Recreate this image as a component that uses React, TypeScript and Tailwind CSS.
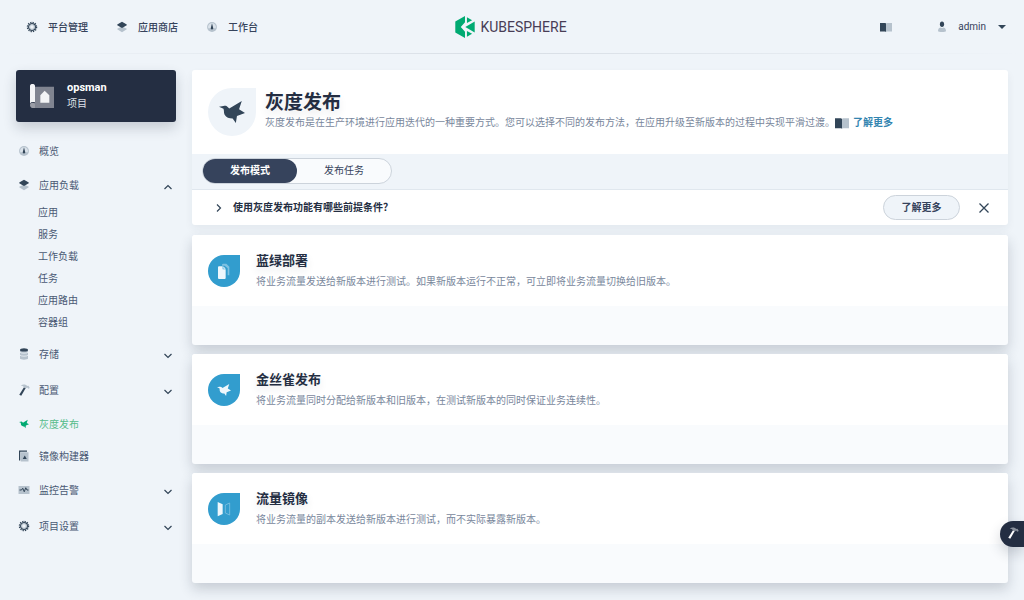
import React from "react";

const DARK = "#324558";
const LIGHT = "#b6c2cd";

type IconProps = { className?: string; dark?: string; light?: string };

function Gear({ className = "size-3", dark = DARK, light = LIGHT }: IconProps) {
  return (
    <svg className={className} viewBox="0 0 24 24" aria-hidden="true">
      <circle cx="12" cy="12" r="9.2" fill="none" stroke={dark} strokeWidth="2.6" strokeDasharray="2.6 2.217" />
      <circle cx="12" cy="12" r="6.8" fill="none" stroke={dark} strokeWidth="2.4" />
      <circle cx="12" cy="12" r="4.6" fill="none" stroke={light} strokeWidth="2" />
    </svg>
  );
}

function Layers({ className = "size-3" }: IconProps) {
  return (
    <svg className={className} viewBox="0 0 24 24" aria-hidden="true">
      <path d="M2.500 15.500 12 11l9.500 4.500v1L12 22.500 2.500 16.500z" fill={LIGHT} />
      <path d="M12 1.500 21.500 7v1.500L12 14 2.500 8.500V7z" fill={DARK} />
    </svg>
  );
}

function Dashboard({ className = "size-3" }: IconProps) {
  return (
    <svg className={className} viewBox="0 0 24 24" aria-hidden="true">
      <circle cx="12" cy="12" r="9.800" fill={LIGHT} />
      <path d="M12 4a8 8 0 0 0-7.500 10.500h15A8 8 0 0 0 12 4z" fill="#dbe3eb" />
      <path d="M12 4.500l2.300 9a2.500 2.500 0 1 1-4.600 0z" fill={DARK} />
    </svg>
  );
}

function Book({ className = "size-3" }: IconProps) {
  return (
    <svg className={className} viewBox="0 0 24 24" aria-hidden="true">
      <path d="M0 4h10.500l1.500 1v17l-1.500-1H0z" fill={DARK} />
      <path d="M24 4H13.500L12 5v17l1.500-1H24z" fill={LIGHT} />
    </svg>
  );
}

function Person({ className = "size-3" }: IconProps) {
  return (
    <svg className={className} viewBox="0 0 24 24" aria-hidden="true">
      <ellipse cx="12" cy="6.500" rx="4.200" ry="5.500" fill={DARK} />
      <path d="M4 20c0-5 3-7 5.500-7 1.500 1.500 3.500 1.500 5 0 2.500 0 5.500 2 5.500 7 0 2.500-16 2.500-16 0z" fill={LIGHT} />
    </svg>
  );
}

function Storage({ className = "size-3" }: IconProps) {
  return (
    <svg className={className} viewBox="0 0 24 24" aria-hidden="true">
      <path d="M4 4v17c0 3 16 3 16 0V4z" fill={LIGHT} />
      <path d="M4 8.500c2 2.500 14 2.500 16 0M4 14.500c2 2.500 14 2.500 16 0" fill="none" stroke="#eff4f9" strokeWidth="1.500" />
      <ellipse cx="12" cy="3.800" rx="8" ry="3.300" fill={DARK} />
    </svg>
  );
}

function Hammer({ className = "size-3", dark = DARK, light = LIGHT }: IconProps) {
  return (
    <svg className={className} viewBox="0 0 24 24" aria-hidden="true">
      <path d="M12 6.500 15.500 8 6.500 23.500 2.500 21.500z" fill={dark} />
      <path d="M5.500 3C10-.5 16 .5 19 4l2-.5 2.500 4.500-3 1.500-2-2.500-3 1.500-4-2C10.500 4.500 8.500 3.500 5.500 3z" fill={light} />
    </svg>
  );
}

function Bird({ className = "size-3", color = DARK }: { className?: string; color?: string }) {
  return (
    <svg className={className} viewBox="41 39 81 81" aria-hidden="true">
      <path
        d="M41 63.500 55 61c5-2 10-.5 13 3l5 4.500 39-23.500-8.500 26 18.500 11.500-25 9.500-3.500 22-10-14c-11 0-20-4-25-12-3-5.500-1-11-3.500-18.500z"
        fill={color}
      />
    </svg>
  );
}

function ImageBuilder({ className = "size-3" }: IconProps) {
  return (
    <svg className={className} viewBox="0 0 24 24" aria-hidden="true">
      <path d="M2 1h16v2.500H4.500V21H2z" fill={DARK} />
      <path d="M5.500 4.500H21V23H5.500z" fill={LIGHT} />
      <path d="m13.500 11 4 7h-8z" fill={DARK} />
    </svg>
  );
}

function Monitor({ className = "size-3" }: IconProps) {
  return (
    <svg className={className} viewBox="0 0 24 24" aria-hidden="true">
      <path d="M1 4h22v16H1z" fill={LIGHT} />
      <path d="M3 12h4l2.500-3.500 3 7 3-8 2.500 4.500h3" fill="none" stroke={DARK} strokeWidth="2" />
    </svg>
  );
}

function Chevron({ className = "" }: { className?: string }) {
  return (
    <svg className={`size-[10px] ${className}`} viewBox="0 0 10 10" aria-hidden="true">
      <path d="m1.500 3 3.500 3.500L8.500 3" fill="none" stroke={DARK} strokeWidth="1.200" />
    </svg>
  );
}

function Logo() {
  return (
    <svg className="h-[22px] w-5" viewBox="45 47 60 68" aria-hidden="true">
      <path d="M75 47v19L62 81l13 15v19L45 98V64z" fill="#00aa72" />
      <path d="M81 51 97 60 81 69z" fill="#00aa72" />
      <path d="M81 93 97 102 81 111z" fill="#00aa72" />
      <path d="M105 64v34L76 81z" fill="#00aa72" />
    </svg>
  );
}

function Project() {
  return (
    <svg className="size-6" viewBox="90 252 72 72" aria-hidden="true">
      <path d="M104 260h58v64H97v-16h7z" fill="#808490" />
      <path d="M90 258c0-8 15-8 15 0v48H97c-4 0-7 4-7 7z" fill="#f3f4f6" />
      <path d="M90 315c0-9 15-9 15 0v9h-8c-4 0-7-4-7-9z" fill="#9a9da6" />
      <path d="M134 272 148 286v22h-27v-22z" fill="#f3f4f6" />
    </svg>
  );
}

function BlueGreen() {
  return (
    <svg className="size-4" viewBox="0 0 48 48" aria-hidden="true">
      <path d="M18 6q0-4 4-4h9l9 9v26h-5V16l-9-8h-8z" fill="#7ec1e1" />
      <path d="M6 13q0-3 3-3h11v9h9v26q0 3-3 3H9q-3 0-3-3z" fill="#eff7fc" />
      <path d="M22 10l7 7h-7z" fill="#eff7fc" />
    </svg>
  );
}

function Mirror() {
  return (
    <svg className="size-4" viewBox="0 0 48 48" aria-hidden="true">
      <path d="M5 3 20 10v29L5 46z" fill="#eff7fc" />
      <path d="M41 6 28 12v24l13 6z" fill="none" stroke="#7ec1e1" strokeWidth="2.500" />
    </svg>
  );
}

const topLinks = [
  { label: "平台管理", icon: <Gear /> },
  { label: "应用商店", icon: <Layers /> },
  { label: "工作台", icon: <Dashboard /> },
];

type NavItem = { label: string; icon: React.ReactNode; active?: boolean; open?: boolean; children?: string[] };

const navItems: NavItem[] = [
  { label: "概览", icon: <Dashboard /> },
  {
    label: "应用负载",
    icon: <Layers />,
    open: true,
    children: ["应用", "服务", "工作负载", "任务", "应用路由", "容器组"],
  },
  { label: "存储", icon: <Storage />, children: [] },
  { label: "配置", icon: <Hammer />, children: [] },
  { label: "灰度发布", icon: <Bird className="size-[10px]" color="#00aa72" />, active: true },
  { label: "镜像构建器", icon: <ImageBuilder /> },
  { label: "监控告警", icon: <Monitor />, children: [] },
  { label: "项目设置", icon: <Gear />, children: [] },
];

const modes = [
  {
    title: "蓝绿部署",
    text: "将业务流量发送给新版本进行测试。如果新版本运行不正常，可立即将业务流量切换给旧版本。",
    icon: <BlueGreen />,
  },
  {
    title: "金丝雀发布",
    text: "将业务流量同时分配给新版本和旧版本，在测试新版本的同时保证业务连续性。",
    icon: <Bird className="size-[14px]" color="#eff7fc" />,
  },
  {
    title: "流量镜像",
    text: "将业务流量的副本发送给新版本进行测试，而不实际暴露新版本。",
    icon: <Mirror />,
  },
];

function NavRow({ item }: { item: NavItem }) {
  const body = (
    <>
      <span className="flex w-[15px] justify-center pb-[2px]">{item.icon}</span>
      <span>{item.label}</span>
    </>
  );
  if (!item.children) {
    return (
      <li>
        <a
          href="#"
          className={`flex h-8 items-center gap-2 ${item.active ? "text-[#55bc8a]" : "text-[#4a5974]"}`}
        >
          {body}
        </a>
      </li>
    );
  }
  return (
    <li>
      <button type="button" aria-expanded={!!item.open} className="flex h-9 w-full items-center gap-2 text-[#4a5974]">
        {body}
        <span className="ml-auto pt-px pr-[3px]">
          <Chevron className={item.open ? "rotate-180" : ""} />
        </span>
      </button>
      {item.open && (
        <ul className="-mt-[2px] pb-[3px] pl-[22px]">
          {item.children.map((child) => (
            <li key={child}>
              <a href="#" className="flex h-[22px] items-center text-[#4a5974]">
                {child}
              </a>
            </li>
          ))}
        </ul>
      )}
    </li>
  );
}

export default function App() {
  return (
    <div className="min-h-screen overflow-x-hidden bg-[#eff4f9] font-[Roboto,'Noto_Sans_CJK_SC',sans-serif] text-[10px] leading-4 text-[#242e42]">
      <header className="grid h-[53px] grid-cols-[1fr_auto_1fr] items-center px-[26px]">
        <nav className="flex gap-7 font-medium text-[#36435c]">
          {topLinks.map((link) => (
            <a key={link.label} href="#" className="flex items-center gap-[10px] pt-[2px]">
              <span className="pb-[2px]">{link.icon}</span>
              {link.label}
            </a>
          ))}
        </nav>
        <a href="#" className="flex items-center gap-[5px] pr-[2px]">
          <Logo />
          <span className="text-[14px] leading-5 text-[#483d55]">KUBESPHERE</span>
        </a>
        <div className="flex items-center justify-end">
          <a href="#" aria-label="文档" className="mr-11">
            <Book />
          </a>
          <button type="button" className="-mr-2 flex items-center gap-[10px] text-[#36435c]">
            <Person />
            admin
            <svg className="ml-[2px] h-1 w-2" viewBox="0 0 8 4" aria-hidden="true">
              <path d="M0 0h8L4 4z" fill={DARK} />
            </svg>
          </button>
        </div>
      </header>
      <div className="h-px bg-linear-to-r from-transparent via-[#d8dee5] to-transparent" />

      <div className="flex gap-4 px-4 pt-4 pb-[17px]">
        <aside className="w-40 shrink-0">
          <button
            type="button"
            className="flex h-[52px] w-full items-center gap-[13px] rounded-[3px] bg-[#242e42] px-[14px] text-left text-white shadow-[0_6px_13px_rgba(36,46,66,0.2)]"
          >
            <Project />
            <span className="flex flex-col">
              <strong className="text-[11px] leading-4">opsman</strong>
              <span className="leading-4 text-[#dfe2e8]">项目</span>
            </span>
          </button>
          <nav className="pt-[14px]">
            <ul>
              {navItems.map((item) => (
                <NavRow key={item.label} item={item} />
              ))}
            </ul>
          </nav>
        </aside>

        <main className="flex min-w-0 flex-1 flex-col gap-[9px]">
          <section className="mb-px overflow-hidden rounded-[3px] bg-white shadow-[0_4px_8px_rgba(36,46,66,0.06)]">
            <div className="flex h-[84px] items-center gap-[9px] px-4">
              <span className="flex size-12 shrink-0 items-center justify-center rounded-full rounded-tr-none bg-[#eff4f9]">
                <Bird className="size-[26px]" />
              </span>
              <div className="pb-[2px]">
                <h1 className="text-[19px] leading-6 font-bold text-shadow-[0_4px_8px_rgba(36,46,66,0.1)]">灰度发布</h1>
                <p className="flex items-center text-[#79879c]">
                  灰度发布是在生产环境进行应用迭代的一种重要方式。您可以选择不同的发布方法，在应用升级至新版本的过程中实现平滑过渡。
                  <a href="#" className="flex items-center gap-1 font-bold text-[#3385b0]">
                    <Book className="size-[14px]" />
                    了解更多
                  </a>
                </p>
              </div>
            </div>
            <div className="flex h-9 items-center border-b border-[#e0e7ee] bg-[#eff4f9] px-[10px] pb-[2px]">
              <div className="flex h-[26px] rounded-full border border-[#ccd3db] bg-[#f9fbfd]">
                <button type="button" className="h-6 w-[94px] rounded-full bg-[#36435c] font-bold text-white">
                  发布模式
                </button>
                <button type="button" className="h-6 w-[94px] rounded-full text-[#36435c]">
                  发布任务
                </button>
              </div>
            </div>
            <div className="flex h-[35px] items-center pr-[21px] pl-[22px]">
              <button type="button" className="flex items-center gap-[9px] font-bold">
                <Chevron className="-rotate-90" />
                使用灰度发布功能有哪些前提条件？
              </button>
              <button
                type="button"
                className="ml-auto h-[25px] w-[77px] rounded-full border border-[#ccd3db] bg-[#eff4f9] font-bold text-[#36435c]"
              >
                了解更多
              </button>
              <button type="button" aria-label="关闭" className="ml-[17px] -mr-1 p-px">
                <svg className="size-3" viewBox="0 0 12 12" aria-hidden="true">
                  <path d="m1.500 1.500 9 9m0-9-9 9" stroke={DARK} strokeWidth="1.300" />
                </svg>
              </button>
            </div>
          </section>

          {modes.map((mode) => (
            <a
              key={mode.title}
              href="#"
              className="block rounded-[3px] bg-[#f9fbfd] shadow-[0_6px_13px_rgba(36,46,66,0.2)]"
            >
              <div className="flex h-[71px] items-center gap-4 rounded-t-[3px] bg-white px-4">
                <span className="flex size-8 shrink-0 items-center justify-center rounded-full rounded-tr-none bg-[#329dce]">
                  {mode.icon}
                </span>
                <div>
                  <h2 className="text-[13px] leading-5 font-bold text-shadow-[0_4px_8px_rgba(36,46,66,0.1)]">
                    {mode.title}
                  </h2>
                  <p className="pt-[3px] text-[#79879c]">{mode.text}</p>
                </div>
              </div>
              <div className="h-[39px]" />
            </a>
          ))}
        </main>
      </div>

      <button
        type="button"
        aria-label="工具箱"
        className="fixed right-0 bottom-[53px] flex h-[26px] w-6 items-center justify-center rounded-l-full bg-[#242e42] pb-[2px] pl-[2px] shadow-[0_6px_13px_rgba(36,46,66,0.2)]"
      >
        <Hammer dark="#ffffff" light="#8a919c" />
      </button>
    </div>
  );
}
